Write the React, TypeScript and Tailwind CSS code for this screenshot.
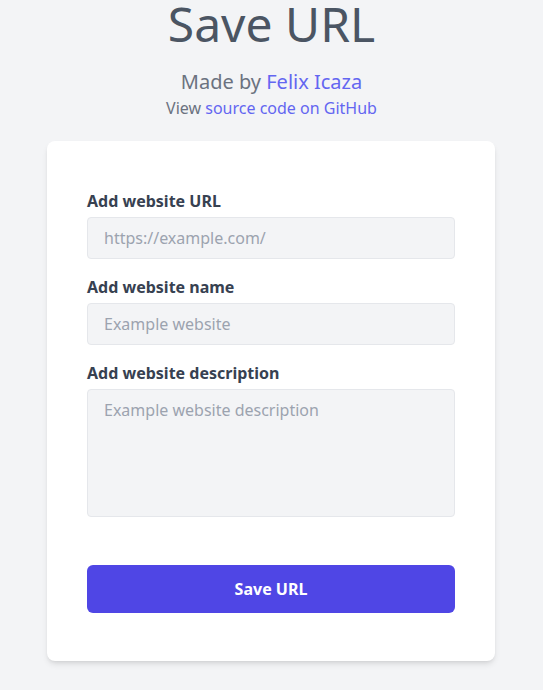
import React from "react";

export default function App() {
  return (
    <div
      className="min-h-screen bg-[#f3f4f6] flex flex-col items-center"
      style={{ fontFamily: '"Noto Sans", "Open Sans", sans-serif' }}
    >
      <h1 className="text-5xl leading-[48px] text-[#4b5563] mt-0">Save URL</h1>
      <p className="mt-5 text-xl leading-7 text-[#6b7280]">
        Made by <a className="text-[#6366f1]" href="#">Felix Icaza</a>
      </p>
      <p className="text-base leading-6 text-[#6b7280]">
        View <a className="text-[#6366f1]" href="#">source code on GitHub</a>
      </p>
      <div className="mt-[21px] mr-[1px] w-[448px] bg-white rounded-lg shadow-md px-10 pt-12 pb-12">
        <form className="flex flex-col" onSubmit={(e) => e.preventDefault()}>
          <label className="text-base leading-6 font-bold text-[#374151] mb-1">Add website URL</label>
          <input
            className="w-full bg-[#f3f4f6] border border-[#e5e7eb] rounded px-4 py-2 text-base leading-6 text-[#374151] placeholder-[#9ca3af] outline-none"
            placeholder="https://example.com/"
          />
          <label className="mt-4 text-base leading-6 font-bold text-[#374151] mb-1">Add website name</label>
          <input
            className="w-full bg-[#f3f4f6] border border-[#e5e7eb] rounded px-4 py-2 text-base leading-6 text-[#374151] placeholder-[#9ca3af] outline-none"
            placeholder="Example website"
          />
          <label className="mt-4 text-base leading-6 font-bold text-[#374151] mb-1">Add website description</label>
          <textarea
            className="w-full h-[128px] resize-none bg-[#f3f4f6] border border-[#e5e7eb] rounded px-4 py-2 text-base leading-6 text-[#374151] placeholder-[#9ca3af] outline-none"
            placeholder="Example website description"
          />
          <button
            type="submit"
            className="mt-12 w-full bg-[#4f46e5] text-white font-bold rounded-md py-3 text-base leading-6"
          >
            Save URL
          </button>
        </form>
      </div>
    </div>
  );
}
